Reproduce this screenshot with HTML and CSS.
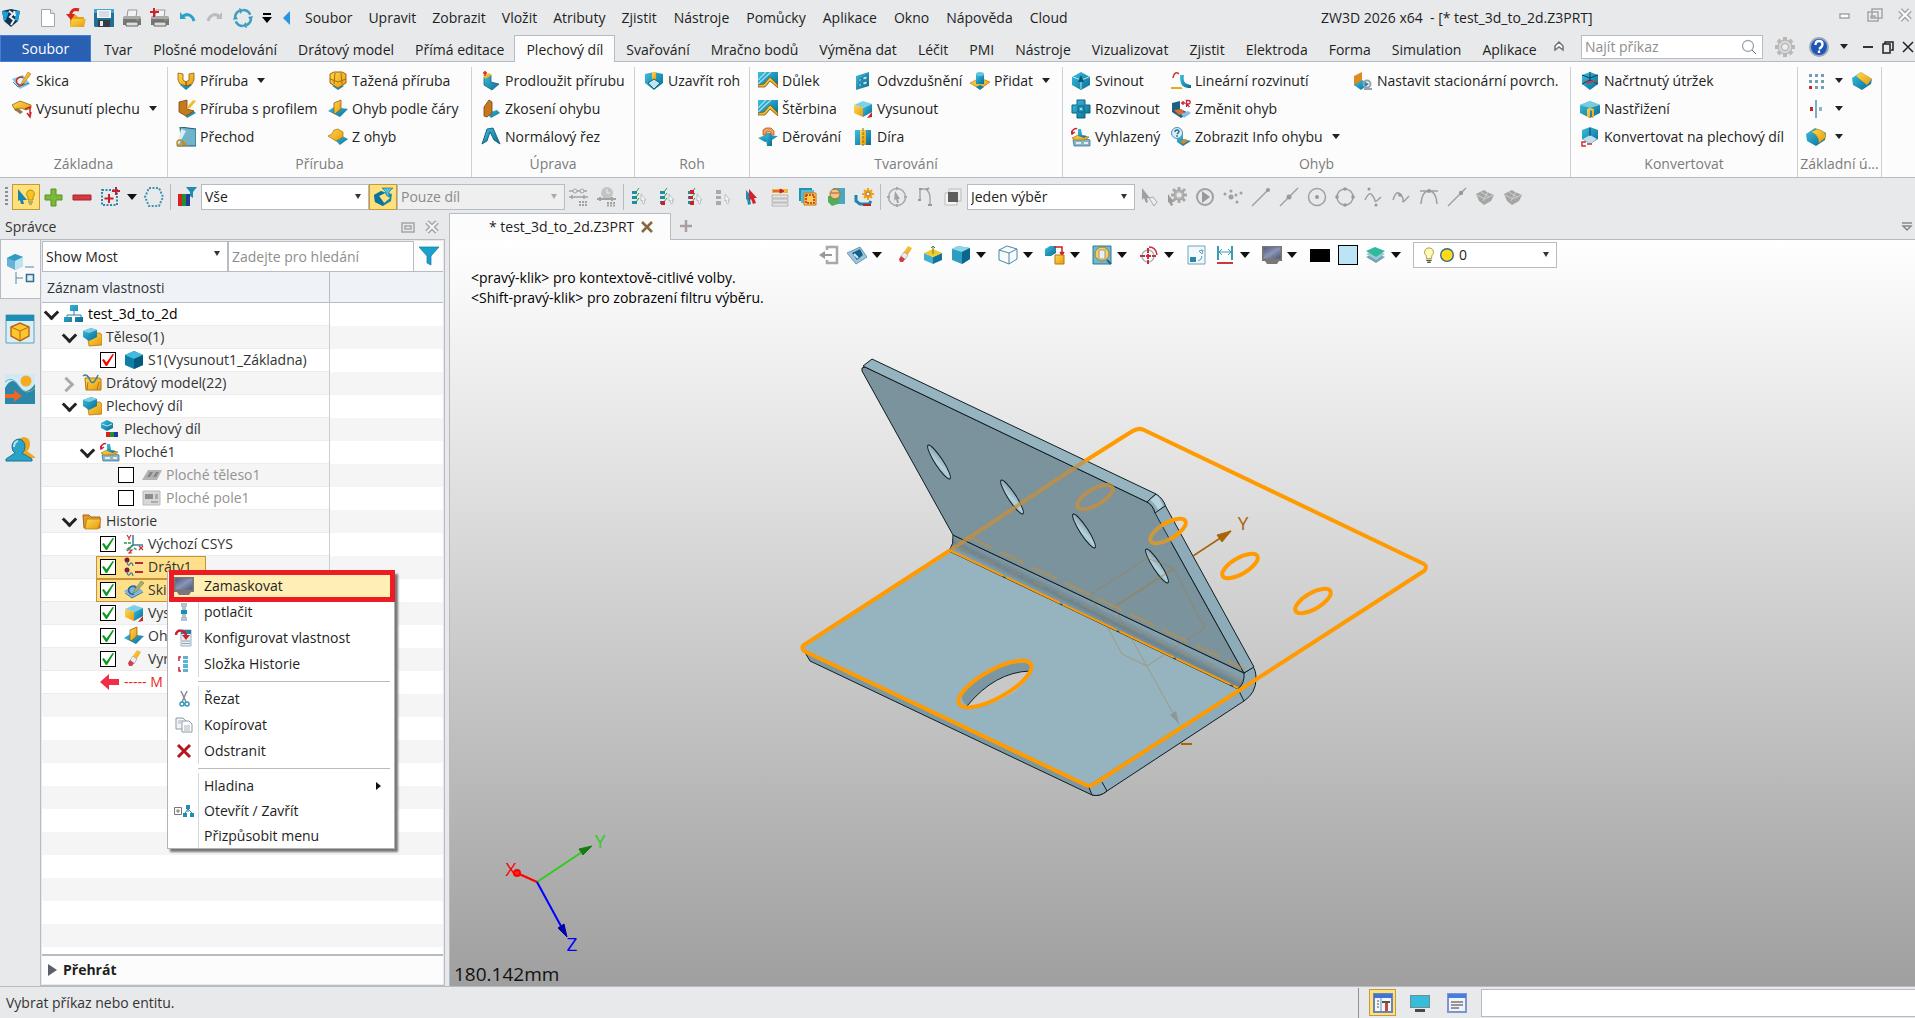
FILE: index.html
```html
<!DOCTYPE html>
<html lang="cs">
<head>
<meta charset="utf-8">
<title>ZW3D 2026 x64 - [* test_3d_to_2d.Z3PRT]</title>
<link rel="stylesheet" href="styles.css">
</head>
<body>
<svg class="sprite" aria-hidden="true">
<defs>
<linearGradient id="t" x1="0" y1="0" x2="1" y2="1"><stop offset="0" stop-color="#3cc0e0"/><stop offset="1" stop-color="#086c94"/></linearGradient>
<linearGradient id="y" x1="0" y1="0" x2="1" y2="1"><stop offset="0" stop-color="#ffd94a"/><stop offset="1" stop-color="#e79a10"/></linearGradient>
<linearGradient id="g" x1="0" y1="0" x2="0" y2="1"><stop offset="0" stop-color="#d4d4d4"/><stop offset="1" stop-color="#8a8a8a"/></linearGradient>
<linearGradient id="scr" x1="0" y1="0" x2="1" y2="1"><stop offset="0" stop-color="#4f5a85"/><stop offset=".5" stop-color="#8b95b5"/><stop offset="1" stop-color="#4c5574"/></linearGradient>
</defs>
<symbol id="logo" viewBox="0 0 20 20"><path d="M1 3l9-2 9 2-2 10-7 6-7-6z" fill="#12314f"/><path d="M1 3l7 1-3 8-2 1zM19 3l-5 0 0 9 3 1z" fill="#1c9fd8"/><path d="M8 3l4 3-3 3 4 3-3 5M13 3l1 5" stroke="#e8f1f6" stroke-width="2" fill="none"/></symbol>
<symbol id="new" viewBox="0 0 20 20"><path d="M3.500 1.500h9l4 4v13h-13z" fill="#fff" stroke="#9aa9ba"/><path d="M12.500 1.500v4h4" fill="#e3e9f0" stroke="#9aa9ba"/></symbol>
<symbol id="open" viewBox="0 0 20 20"><path d="M4 7h6l2 2h6v9H4z" fill="#e8a01c"/><path d="M6 11h14l-2 8H4z" fill="url(#y)"/><path d="M13 2C7 0 4 4 5 8" stroke="#d9261c" stroke-width="3" fill="none"/><path d="M0 6l9 0-4 6z" fill="#d9261c"/></symbol>
<symbol id="save" viewBox="0 0 20 20"><path d="M0 1h20v18H1l-1-1z" fill="#216f94"/><path d="M0 1h20v4H0z" fill="#43a5cd"/><path d="M3 2h14v8H3z" fill="#f4f6f7"/><path d="M5 4h10M5 6h10M5 8h10" stroke="#b9c3ca"/><path d="M4 12h12v7H4z" fill="#343c44"/><path d="M6 13h3v5H6z" fill="#e8ecef"/></symbol>
<symbol id="print" viewBox="0 0 20 20"><path d="M6 2h9l-1 7H5z" fill="#f3f3f3" stroke="#999"/><path d="M2 8h16l1 3v6H1v-6z" fill="#777"/><path d="M2 8h16l1 3H1z" fill="#aaa"/><path d="M4 14h12v4H4z" fill="#dcdcdc" stroke="#666"/><path d="M14 12h3" stroke="#5c5" /></symbol>
<symbol id="printp" viewBox="0 0 20 20"><use href="#print"/><path d="M4 0v9M0 4h9" stroke="#d3202c" stroke-width="2"/></symbol>
<symbol id="undo" viewBox="0 0 20 20"><path d="M5 9c4-4 10-3 12 4" stroke="#27a3cd" stroke-width="3" fill="none"/><path d="M3 4l6 7H3z" fill="#27a3cd"/></symbol>
<symbol id="redo" viewBox="0 0 20 20"><path d="M15 9C11 5 5 6 3 13" stroke="#bcbcbc" stroke-width="3" fill="none"/><path d="M17 4l-6 7h6z" fill="#bcbcbc"/></symbol>
<symbol id="refresh" viewBox="0 0 20 20"><circle cx="10" cy="10" r="8" fill="none" stroke="#3d9fc0" stroke-width="2.500" stroke-dasharray="9 3.500"/><path d="M6 0l5 2-4 4zM20 8l-2 5-3-4zM14 20l-5-2 4-4zM0 12l2-5 3 4z" fill="#3d9fc0"/></symbol>
<symbol id="car" viewBox="0 0 10 10"><path d="M0 2h10L5 8z" fill="#111"/></symbol>
<symbol id="scar" viewBox="0 0 10 10"><path d="M1 2h8L5 7z" fill="#222"/></symbol>
<symbol id="sketch" viewBox="0 0 20 20"><path d="M0 8l11-4 7 9-10 5z" fill="#8fc3e0"/><path d="M1 11l5 5 11-4" fill="none" stroke="#3981a8"/><path d="M11 7a4 4 0 10 1 5" fill="#e6f2fa" stroke="#b3332c" stroke-width="1.500"/><path d="M10 11l6-10 3 2-7 9-3 1z" fill="url(#y)" stroke="#b7781a" stroke-width=".6"/></symbol>
<symbol id="sketchb" viewBox="0 0 20 20"><path d="M0 11l11-6 8 6-11 7z" fill="#7fb5dd"/><path d="M1 13l7 5 11-6" fill="none" stroke="#3b77a8"/><path d="M12 8a4 4 0 10-2 6" fill="none" stroke="#2a5f96" stroke-width="1.500"/><path d="M10 11l7-10 3 2-8 9-3 1z" fill="#a9ae72" stroke="#77793f" stroke-width=".6"/></symbol>
<symbol id="sheet" viewBox="0 0 20 20"><path d="M0 6l8-4 11 4v3l-5 2-5-2-5 3z" fill="url(#y)" stroke="#8a6416" stroke-width=".8"/><path d="M2 10l4-1 5 4-3 2z" fill="#94793d"/><path d="M13 10l5-2v9M15 14l3 4 1-5" stroke="#c9262c" stroke-width="1.500" fill="none"/></symbol>
<symbol id="flange" viewBox="0 0 20 20"><path d="M4 14l6-4 6 4-6 5z" fill="url(#t)"/><path d="M2 2l5 1v6l3 2v4l-6-2-2-4zM18 2l-5 1v6l-3 2v4l6-2 2-4z" fill="url(#y)" stroke="#8a5a12" stroke-width=".8"/></symbol>
<symbol id="flprof" viewBox="0 0 20 20"><path d="M8 15l8-4 4 3-9 5z" fill="url(#t)"/><path d="M3 3l8-2v9l7 2-8 5-7-4z" fill="#c57a1d" stroke="#7c430d" stroke-width=".8"/><path d="M11 8l6-7 3 1-6 7-3 1z" fill="url(#y)"/></symbol>
<symbol id="trans" viewBox="0 0 20 20"><path d="M4 0l16 2v17H1l4-9z" fill="#71b4ca" stroke="#155c78"/><path d="M5 2l5 2L3 17l-2 1z" fill="#d7eef5"/><circle cx="4" cy="16" r="3" fill="none" stroke="#c88b1c" stroke-width="1.500"/><path d="M6 14l5 5" stroke="#c88b1c" stroke-width="2"/></symbol>
<symbol id="swept" viewBox="0 0 20 20"><path d="M4 15l6-3 6 3-6 4z" fill="url(#t)"/><path d="M2 3l4-2h8l4 2v9l-8 5-8-5z" fill="url(#y)" stroke="#9b6710"/><path d="M7 2l-1 11M13 2l1 11M2 8l8 3 8-3" stroke="#a86e12" fill="none"/></symbol>
<symbol id="bendline" viewBox="0 0 20 20"><path d="M0 12l6-4 14 2-8 8z" fill="url(#t)"/><path d="M6 4l7-3v9l-6 5-1-1z" fill="url(#y)" stroke="#a1590e" stroke-width=".8"/></symbol>
<symbol id="zbend" viewBox="0 0 20 20"><path d="M7 13l7-4 6 3-8 6z" fill="url(#t)"/><path d="M0 9l4-2 2-4 4-1 5 3v5l-7 4z" fill="url(#y)" stroke="#ad6f0e" stroke-width=".7"/></symbol>
<symbol id="extend" viewBox="0 0 20 20"><path d="M3 6l7-2v7l8 2-7 6-8-5z" fill="url(#t)" stroke="#0b5675" stroke-width=".7"/><path d="M2 4l6-2 3 2-7 4z" fill="url(#y)"/><path d="M4 5V0M2 2h4" stroke="#d8281f" stroke-width="1.500"/></symbol>
<symbol id="taper" viewBox="0 0 20 20"><path d="M6 14l10-3 3 3-9 5z" fill="url(#t)"/><path d="M3 17V8l5-7 3 2v11l-5 4z" fill="#c57a1d" stroke="#7c430d" stroke-width=".8"/></symbol>
<symbol id="ncut" viewBox="0 0 20 20"><path d="M1 17L6 2l6-1 7 16-6-4-4-8-3 9z" fill="url(#t)" stroke="#0a4c6a" stroke-width=".8"/></symbol>
<symbol id="corner" viewBox="0 0 20 20"><path d="M1 3l9-2 9 2v9l-9 7-9-7z" fill="url(#t)"/><path d="M8 1h4v8H8z" fill="url(#y)"/><path d="M4 12l6-4 6 4-6 6z" fill="#bfe3ef" stroke="#146384"/></symbol>
<symbol id="dimple" viewBox="0 0 20 20"><path d="M0 1h20v15l-8-6-3 4-4 2-5-2z" fill="url(#t)"/><path d="M0 13L13 1M0 9L8 1" stroke="#9cdcea" stroke-width="1.500"/><path d="M0 14l6-1 6-7 8 8v3l-8-7-5 6-7 0z" fill="url(#y)" stroke="#7c5a18" stroke-width=".8"/></symbol>
<symbol id="punch" viewBox="0 0 20 20"><path d="M0 11l7-3 13 1-6 4-7 2z" fill="url(#t)"/><path d="M7 6h7v13H9z" fill="url(#t)"/><path d="M5 8V3l3-2h5l3 3v4h-3V5H8v3z" fill="#f2a35b" stroke="#b5551a" stroke-width=".8"/></symbol>
<symbol id="louver" viewBox="0 0 20 20"><path d="M3 5l13-4v14L3 19z" fill="url(#t)"/><path d="M6 8l2-1v3l-2 1zM10 6l4-1v3l-4 1zM6 13l2-1v3l-2 1zM10 11l4-1v3l-4 1z" fill="#bde6f2" stroke="#0a5d80" stroke-width=".6"/></symbol>
<symbol id="extrude" viewBox="0 0 20 20"><path d="M1 6l9-4 9 3-9 4z" fill="#7fd0e6"/><path d="M1 6l9 3v9l-9-4z" fill="url(#y)"/><path d="M10 9l9-4v8l-9 5z" fill="url(#t)"/><path d="M14 19l5-1 0-5z" fill="#cf2027"/></symbol>
<symbol id="hole" viewBox="0 0 20 20"><path d="M2 3h16v15H2z" fill="url(#t)"/><path d="M7 3h6v15H7z" fill="url(#y)"/><path d="M10 1v18" stroke="#8a6416" stroke-dasharray="3 1"/></symbol>
<symbol id="add" viewBox="0 0 20 20"><path d="M0 12l10-5 10 4-10 7z" fill="url(#y)" stroke="#b27814" stroke-width=".7"/><path d="M6 3h8v10H6z" fill="url(#t)"/><ellipse cx="10" cy="3" rx="4" ry="2" fill="#66c4de"/><path d="M6 16l4-2 4 2-4 3z" fill="#1680a6"/></symbol>
<symbol id="fold" viewBox="0 0 20 20"><path d="M1 6l9-5 9 5v8l-9 5-9-5z" fill="url(#t)"/><path d="M2 6l8 3 8-3M10 9v9" stroke="#bfe6f0" fill="none"/><path d="M7 11l3-7 3 7z" fill="#08587a"/></symbol>
<symbol id="unfold" viewBox="0 0 20 20"><path d="M6 1h8v5h5v8h-5v5H6v-5H1V6h5z" fill="url(#t)" stroke="#0a6185"/><path d="M7 7h6v6H7z" fill="#2d9dbf" stroke="#0a5c80"/><circle cx="10" cy="10" r="1" fill="#cfeef6"/></symbol>
<symbol id="flat" viewBox="0 0 20 20"><path d="M2 13l7-3 10 3v6H3z" fill="#86b6cf" stroke="#2d6785" stroke-width=".7"/><path d="M5 16h5M13 16h4" stroke="#fff" stroke-width="1.500"/><path d="M1 11l6-3 11 2-4 3H4z" fill="url(#y)" stroke="#96640e" stroke-width=".6"/><path d="M7 9V2h3l1 6 5 1-3 2z" fill="url(#t)"/><path d="M1 6c0-4 4-5 5-4M0 4l1 3 3-2" stroke="#c82430" stroke-width="1.500" fill="none"/></symbol>
<symbol id="linear" viewBox="0 0 20 20"><path d="M9 4h4c-1 6 0 9 7 10v3c-8 0-11-2-11-13z" fill="url(#t)"/><path d="M0 16h10l2 2H0z" fill="#e6a91c"/><path d="M2 7C3 1 6 1 8 3" stroke="#d03a34" stroke-width="1.500" fill="none"/></symbol>
<symbol id="chbend" viewBox="0 0 20 20"><path d="M1 4l8-2v8l9 4-8 5-9-6z" fill="#1e5f86"/><path d="M3 11l8-1 2 4-5 2z" fill="#e06b2d"/><path d="M10 15l7-3 3 2-7 5z" fill="#8bbbe0"/><path d="M10 4h4M12 2v4M15.500 8V1.500h2a1.500 1.500 0 010 3.500h-2l3 3" stroke="#c72531" stroke-width="1.300" fill="none"/></symbol>
<symbol id="info" viewBox="0 0 20 20"><path d="M6 8l6-1v5l8 2-8 5-6-4z" fill="url(#t)"/><path d="M9 14l6-2 2 2-5 3z" fill="#d98b1e"/><circle cx="6" cy="6" r="5.500" fill="#d8ecf5" stroke="#4f8fae"/><path d="M4 5q0-2 2-2t2 2l-2 2M6 8v2" stroke="#1e6c90" stroke-width="1.300" fill="none"/></symbol>
<symbol id="station" viewBox="0 0 20 20"><path d="M1 5l8-4v9l-8 5z" fill="#e08a1d"/><path d="M1 14l8-5 7 4-8 6z" fill="url(#t)"/><circle cx="14" cy="13" r="3.500" fill="none" stroke="#98a2aa" stroke-width="2"/><path d="M11 18h8" stroke="#98a2aa" stroke-width="2"/></symbol>
<symbol id="rip" viewBox="0 0 20 20"><path d="M2 4l8-3 8 3v9l-8 6-8-6z" fill="url(#t)"/><path d="M2 4l8 3 8-3M10 1v9M2 13l8-4 8 4" stroke="#08405f" fill="none"/><path d="M5 10l3 2 4-2 4 1" stroke="#d6323a" stroke-width="1.500" fill="none"/></symbol>
<symbol id="shear" viewBox="0 0 20 20"><path d="M0 6l10-4 10 4v8l-10 5L0 14z" fill="url(#t)"/><path d="M0 6l10 3 10-3-10-4z" fill="#79cbe0"/><path d="M7 18v-8l3-1 4 1v8l-2 1v-7l-2-1v8z" fill="url(#y)"/></symbol>
<symbol id="conv" viewBox="0 0 20 20"><path d="M2 3l8-3 8 3v9l-8 5-8-5z" fill="url(#t)"/><path d="M3 12l7-4 7 4-7 5z" fill="#bfe0ec"/><path d="M10 1v8" stroke="#073c58"/><path d="M6 15H2v4h4M7 17h5" stroke="#d22c35" stroke-width="1.500" fill="none"/></symbol>
<symbol id="pattern" viewBox="0 0 20 20"><path d="M3 3h3v3H3zM9 3h3v3H9zM15 3h3v3h-3zM3 9h3v3H3zM9 9h3v3H9zM15 9h3v3h-3zM9 15h3v3H9zM15 15h3v3h-3z" fill="#6f9fb5"/><path d="M3 15h3v3H3z" fill="#d0222c"/></symbol>
<symbol id="mirror" viewBox="0 0 20 20"><path d="M10 1v18" stroke="#4799b8" stroke-width="1.500"/><path d="M4 8h3v4H4z" fill="#d0222c"/><path d="M13 8h3v4h-3z" fill="#8fb3c3"/></symbol>
<symbol id="chamf" viewBox="0 0 20 20"><path d="M0 7l9-6 11 7-1 5-9 6-9-5z" fill="url(#t)"/><path d="M4 5l5-4 11 7-5 6z" fill="url(#y)"/></symbol>
<symbol id="fillet" viewBox="0 0 20 20"><path d="M0 7l9-6 11 5-1 7-9 6-9-5z" fill="url(#t)"/><path d="M5 5l6-3q9 2 9 8l-7 6q0-8-8-11z" fill="url(#y)" stroke="#a87712" stroke-width=".5"/></symbol>
<symbol id="pick" viewBox="0 0 20 20"><path d="M2 2l9 11H7l1 4-3 0-1-4-2 1z" fill="#1a86b0"/><path d="M14 3a4 4 0 013 7v3h-5v-3a4 4 0 012-7z" fill="#f8c51e" stroke="#b98a10"/><path d="M12 15h5M13 17h3" stroke="#7c7250"/></symbol>
<symbol id="plus" viewBox="0 0 20 20"><path d="M7 2h5v6h6v5h-6v6H7v-6H1V8h6z" fill="#7db83a" stroke="#5b9324"/></symbol>
<symbol id="minus" viewBox="0 0 20 20"><path d="M1 8h18v5H1z" fill="#d23a41" stroke="#a9222a"/></symbol>
<symbol id="marq" viewBox="0 0 20 20"><path d="M2 3h15v15H2z" fill="none" stroke="#2f89a9" stroke-width="2" stroke-dasharray="2 1.500"/><path d="M9 7v9M4.500 11.500h9M16 0v8M12 4h8" stroke="#c3202c" stroke-width="2"/></symbol>
<symbol id="hex" viewBox="0 0 20 20"><path d="M5 1h10l4 9-4 9H5l-4-9z" fill="none" stroke="#3f93b1" stroke-width="2" stroke-dasharray="2 1.500"/></symbol>
<symbol id="rgb" viewBox="0 0 20 20"><path d="M1 7h4v12H1z" fill="#d91e24"/><path d="M5 7h4v12H5z" fill="#21902f"/><path d="M9 7h4v12H9z" fill="#273a9b"/><path d="M9 0h11l-4 5v6l-3-2V5z" fill="#1f8db3"/></symbol>
<symbol id="cubef" viewBox="0 0 20 20"><path d="M1 8l7-4 11 3-1 7-8 5-8-4z" fill="url(#t)"/><path d="M6 9l6-3 5 5-6 5z" fill="#ffe07a"/><path d="M1 8l7-4 4 2-6 3 5 7-1 3-8-4z" fill="#0c749c"/><path d="M9 1h11l-4 4v5l-3-2V5z" fill="#4cc3df" stroke="#0e6d8e" stroke-width=".6"/></symbol>
<symbol id="ref1" viewBox="0 0 20 20"><circle cx="6" cy="4" r="2" fill="none" stroke="#a2a2a2"/><circle cx="13" cy="4" r="2" fill="none" stroke="#a2a2a2"/><path d="M0 4h4M8 4h3M15 4h3M0 10h19M3 8v4M15 8v4" stroke="#a2a2a2" stroke-width="1.500"/><path d="M10 15h9M10 18h9" stroke="#a2a2a2" stroke-width="2" stroke-dasharray="2 1"/></symbol>
<symbol id="ref2" viewBox="0 0 20 20"><circle cx="10" cy="6" r="6" fill="#c4c4c4"/><path d="M10 2v4h3" stroke="#eee" fill="none"/><path d="M0 12h19M3 10v4M15 10v4" stroke="#a2a2a2" stroke-width="2"/><path d="M10 16h9M10 18.500h9" stroke="#a2a2a2" stroke-width="2" stroke-dasharray="2 1"/></symbol>
<symbol id="l1" viewBox="0 0 20 20"><path d="M2 4h5v3H2zM2 9h5v3H2zM2 14h5v3H2z" fill="#198eac"/><path d="M5 4l1 1 3-4M5 9l1 1 3-4M5 14l1 1 3-4" stroke="#2e9a38" fill="none"/><path d="M11 7l5 6h-2l1 3-2 1-1-4-1 1z" fill="#f5f5f5" stroke="#aab8c2" stroke-width=".8"/></symbol>
<symbol id="l2" viewBox="0 0 20 20"><use href="#l1"/><path d="M3 14h4v4H3z" fill="#cf2029"/></symbol>
<symbol id="l3" viewBox="0 0 20 20"><use href="#l1"/><path d="M4 3h4v4H4zM3 9h4v3H3zM4 14h4v4H4z" fill="#cf2029"/></symbol>
<symbol id="l4" viewBox="0 0 20 20"><path d="M2 3h5v4H2zM2 9h5v3H2zM2 14h5v4H2z" fill="#aaa"/><path d="M11 7l5 6h-2l1 3-2 1-1-4-1 1z" fill="#f5f5f5" stroke="#b8b8b8" stroke-width=".8"/></symbol>
<symbol id="arr2" viewBox="0 0 20 20"><path d="M4 3l8 9H8l1 5-3 1-1-6-1 1z" fill="#1c8fb5"/><path d="M7 2l8 9h-3l2 5-3 1-2-5-2 2z" fill="#d4222b"/></symbol>
<symbol id="rows" viewBox="0 0 20 20"><path d="M2 2h16v4H2z" fill="#f4b43a"/><path d="M3 4h9M10 2l4 2-4 2z" stroke="#c92020" fill="#c92020"/><path d="M2 8h16v3H2zM2 12h16v3H2zM2 16h16v3H2z" fill="#e5e5e5" stroke="#a3a3a3" stroke-width=".7"/></symbol>
<symbol id="boxsel" viewBox="0 0 20 20"><path d="M1 1h13v13H1z" fill="#1e93b4"/><path d="M3 3h13v13H3z" fill="#5cb9d0"/><path d="M6 6h12v12H6z" fill="#ffcf4c" stroke="#c4790f"/><path d="M8 8h8v8H8z" fill="none" stroke="#c3202c" stroke-width="1.500" stroke-dasharray="2 1"/></symbol>
<symbol id="ballsel" viewBox="0 0 20 20"><path d="M7 1h12v16H7z" fill="#4ba7c0"/><path d="M2 9h12l-2 8-6 2-4-4z" fill="#4fae5b"/><circle cx="9" cy="7" r="5" fill="#f0c58c" stroke="#a66a2c"/><path d="M5 6h8" stroke="#b35828"/></symbol>
<symbol id="gearsel" viewBox="0 0 20 20"><path d="M2 8v6l4 3h9l2-3" stroke="#1b87ad" stroke-width="3" fill="none"/><path d="M9 18h8" stroke="#c3202c" stroke-width="2"/><path d="M14 1v12M8 7h12M10 3l8 8M18 3l-8 8" stroke="#eda41c" stroke-width="2"/><circle cx="14" cy="7" r="4" fill="#eda41c"/><circle cx="14" cy="7" r="2" fill="#fff" stroke="#b86a10"/></symbol>
<symbol id="g1" viewBox="0 0 20 20"><circle cx="10" cy="10" r="8.500" fill="none" stroke="#a7a7a7" stroke-width="1.500"/><path d="M8 4l5 8h-2l1 4h-2l-1-4-2 2z" fill="#a2a2a2"/><path d="M0 10h3M17 10h3M10 0v3M10 17v3" stroke="#a7a7a7" stroke-width="2"/></symbol>
<symbol id="g2" viewBox="0 0 20 20"><path d="M5 14V2h6q5 3 4 15" fill="none" stroke="#a7a7a7" stroke-width="1.500"/><path d="M3 13h3M13 18h4M4 2h3M11 3l3-2" stroke="#999" stroke-width="2"/></symbol>
<symbol id="g3" viewBox="0 0 20 20"><path d="M6 2h12v12H6z" fill="#ededed" stroke="#bbb"/><path d="M2 6h12v12H2z" fill="#f4f4f4" stroke="#bbb"/><path d="M5 5h10v10H5z" fill="#5d5d5d"/></symbol>
<symbol id="g4" viewBox="0 0 20 20"><path d="M3 1l8 10H8l1 4-2 1-2-5-2 2z" fill="#a0a0a0"/><path d="M10 11l4-1 4 5-3 4z" fill="#eee" stroke="#aaa"/></symbol>
<symbol id="g5" viewBox="0 0 20 20"><path d="M12 0v16M4 8h16M6 2l12 12M18 2L6 14" stroke="#aaa" stroke-width="3"/><circle cx="12" cy="8" r="5" fill="#b5b5b5" stroke="#a3a3a3"/><circle cx="12" cy="8" r="2.500" fill="#e7e8ea"/><path d="M1 7l6 8H5l1 3-2 1-2-4-1 1z" fill="#9a9a9a"/></symbol>
<symbol id="g6" viewBox="0 0 20 20"><circle cx="10" cy="10" r="8" fill="none" stroke="#a0a0a0" stroke-width="2"/><path d="M7 4l8 6-8 6z" fill="#999"/></symbol>
<symbol id="g7" viewBox="0 0 20 20"><g fill="#a0a0a0"><circle cx="2" cy="7" r="1.500"/><circle cx="8" cy="4" r="1.500"/><circle cx="8" cy="10" r="2.500"/><circle cx="13" cy="8" r="1.500"/><circle cx="18" cy="6" r="1.500"/><circle cx="14" cy="15" r="1.500"/></g></symbol>
<symbol id="g8" viewBox="0 0 20 20"><path d="M1 19L17 3" stroke="#a0a0a0" stroke-width="1.500"/><circle cx="17" cy="3" r="2" fill="#999"/></symbol>
<symbol id="g9" viewBox="0 0 20 20"><path d="M1 19L19 1" stroke="#a0a0a0" stroke-width="1.500"/><circle cx="10" cy="10" r="2.500" fill="#999"/></symbol>
<symbol id="g10" viewBox="0 0 20 20"><circle cx="10" cy="10" r="8.500" fill="none" stroke="#a0a0a0" stroke-width="1.500"/><circle cx="10" cy="10" r="2" fill="#999"/></symbol>
<symbol id="g11" viewBox="0 0 20 20"><circle cx="10" cy="10" r="8" fill="none" stroke="#a0a0a0" stroke-width="1.500"/><g fill="#999"><circle cx="10" cy="2" r="1.800"/><circle cx="10" cy="18" r="1.800"/><circle cx="2" cy="10" r="1.800"/><circle cx="18" cy="10" r="1.800"/></g></symbol>
<symbol id="g12" viewBox="0 0 20 20"><path d="M2 13q4-9 7-5t3 6 6-4" fill="none" stroke="#a0a0a0" stroke-width="1.500"/><circle cx="6" cy="2" r="1.500" fill="#999"/><circle cx="13" cy="18" r="1.500" fill="#999"/></symbol>
<symbol id="g13" viewBox="0 0 20 20"><path d="M2 13q3-10 7-6t3 7 6-5" fill="none" stroke="#a0a0a0" stroke-width="1.500"/><circle cx="9" cy="8" r="1.800" fill="#999"/></symbol>
<symbol id="g14" viewBox="0 0 20 20"><path d="M1 4h18M2 17q1-13 8-13t8 13" fill="none" stroke="#a0a0a0" stroke-width="1.500"/><circle cx="10" cy="4" r="2" fill="#999"/></symbol>
<symbol id="g15" viewBox="0 0 20 20"><path d="M1 19L19 1" stroke="#a0a0a0" stroke-width="1.500"/><circle cx="14" cy="6" r="2.200" fill="#999"/></symbol>
<symbol id="g16" viewBox="0 0 20 20"><path d="M1 7l8-4 3 2 7 3-3 6-7 4-5-4z" fill="#a5a5a5"/><path d="M2 8l8 4 8-4M6 5l8 5M8 14l5-9" stroke="#cfcfcf" fill="none"/></symbol>
<symbol id="tree" viewBox="0 0 20 20"><path d="M10 6v5M3 14v-3h14v3" stroke="#3c7f9d" fill="none"/><path d="M6 1h8v6H6zM0 13h8v5H0zM11 13h8v5h-8z" fill="url(#t)"/></symbol>
<symbol id="folder" viewBox="0 0 20 20"><path d="M1 4h6l2 2h9v11H2z" fill="#e29a25" stroke="#a8641a"/><path d="M5 8h14l-3 10H3z" fill="url(#y)" stroke="#b87617" stroke-width=".7"/></symbol>
<symbol id="fcube" viewBox="0 0 20 20"><path d="M5 6h13l2 2v10l-13 1z" fill="url(#y)" stroke="#b87617" stroke-width=".8"/><path d="M1 4l8-3 6 2v7l-8 4-6-4z" fill="url(#t)"/><path d="M1 4l8-3 6 2-8 3z" fill="#7dd0e4"/></symbol>
<symbol id="fwire" viewBox="0 0 20 20"><path d="M3 5h14l2 1v11H4z" fill="url(#y)" stroke="#b87617"/><path d="M6 9l-1 8M17 9l-2 8" stroke="#b87617"/><path d="M1 3q4-3 7 4t8-5" fill="none" stroke="#3b7f97" stroke-width="1.500"/></symbol>
<symbol id="cube" viewBox="0 0 20 20"><path d="M1 5l9-4 9 4v10l-9 4-9-4z" fill="#0f7fa6"/><path d="M1 5l9-4 9 4-9 4z" fill="#42bcdc"/><path d="M10 9l9-4v10l-9 4z" fill="#075a7e"/></symbol>
<symbol id="smc" viewBox="0 0 20 20"><path d="M1 4l6-3 6 3v5l-6 3-6-3z" fill="url(#t)"/><path d="M2 5l5 2 5-2" stroke="#bfe6f0" fill="none"/><path d="M6 13h4v5H6z" fill="#d91e24"/><path d="M10 13h4v5h-4z" fill="#21902f"/><path d="M14 13h4v5h-4z" fill="#273a9b"/></symbol>
<symbol id="gsheet" viewBox="0 0 20 20"><path d="M0 15l6-10h14l-5 10z" fill="#b3b3b3"/><path d="M5 12l3-5h3l-3 5zM11 12l3-5h3l-3 5z" fill="#858585"/></symbol>
<symbol id="gbox" viewBox="0 0 20 20"><path d="M1 3h17v14H1z" fill="#d7d7d7" stroke="#bbb"/><path d="M3 6h8v5H3z" fill="#8c8c8c"/><path d="M13 6h3v5h-3zM9 13h7v2H9z" fill="#aaa"/></symbol>
<symbol id="csys" viewBox="0 0 20 20"><path d="M9 11V1M9 11h10M9 11l-6 6" stroke="#3c7f9d" stroke-width="1.500"/><path d="M9 11l-7 5M0 9h7M10 14l3 2" stroke="#2a9a3a" stroke-width="1.500" stroke-dasharray="3 1"/><path d="M3 1l2 3 2-3M5 4v2M15 12l4 4M19 12l-4 4M5 16h3l-3 3h3" stroke="#d02a33" stroke-width="1.200" fill="none"/></symbol>
<symbol id="wires" viewBox="0 0 20 20"><circle cx="3" cy="3" r="2.500" fill="#851d3a"/><circle cx="3" cy="13" r="2.500" fill="#851d3a"/><path d="M3 5q1 5 3 2t3 2M3 15q1 5 3 2t3 2" stroke="#39809d" fill="none" stroke-width="1.300"/><path d="M11 6h8M11 15h8" stroke="#b0293e" stroke-width="2"/></symbol>
<symbol id="eraser" viewBox="0 0 20 20"><path d="M8 8l5-7 4 2-5 8z" fill="url(#y)"/><path d="M6 11l3-4 4 3-3 5z" fill="#ececec" stroke="#999" stroke-width=".6"/><path d="M4 14l2-3 4 3-2 3-3 0z" fill="#cf3f4a"/></symbol>
<symbol id="stop" viewBox="0 0 20 20"><path d="M0 10l9-8v5h10v6H9v5z" fill="#ef2f46"/></symbol>
<symbol id="mon" viewBox="0 0 20 20"><path d="M0 1h20v15H0z" fill="#777" /><path d="M1.500 2.500h17v11h-17z" fill="url(#scr)"/><path d="M3 16h14l-2 3H5z" fill="#777"/></symbol>
<symbol id="supp" viewBox="0 0 20 20"><path d="M7 1h6v4H7zM7 15h6v4H7zM8 5h4v3H8zM8 12h4v3H8z" fill="#b3c3cc"/><path d="M7 8h6v4H7z" fill="#1690bb"/></symbol>
<symbol id="conf" viewBox="0 0 20 20"><path d="M7 2h10v16H7z" fill="#e6edf2" stroke="#9fb1bd"/><path d="M7 2h10v4H7z" fill="#2e7e9e"/><path d="M8 13h8M8 15.500h8" stroke="#92a8b5"/><path d="M2 7C2 1 11 1 12 8" stroke="#cc2230" stroke-width="2.500" fill="none"/><path d="M8 7h8l-4 5z" fill="#cc2230"/></symbol>
<symbol id="hfold" viewBox="0 0 20 20"><path d="M9 2h5v3H9zM9 6h5v3H9zM9 10h5v4H9zM9 15h5v3H9z" fill="#5eb3d3"/><path d="M7 3H5v4M5 13v4h2" stroke="#c92030" stroke-width="1.500" fill="none"/></symbol>
<symbol id="cut" viewBox="0 0 20 20"><path d="M7 2l5 11M13 2L8 13" stroke="#7b8d98" stroke-width="1.500"/><circle cx="8" cy="15" r="2" fill="none" stroke="#3497bb" stroke-width="1.500"/><circle cx="13" cy="15" r="2" fill="none" stroke="#3497bb" stroke-width="1.500"/></symbol>
<symbol id="copy" viewBox="0 0 20 20"><path d="M2 3h7l3 3v8H2z" fill="#f4f5f6" stroke="#8d9aa3"/><path d="M8 6h7l3 3v8H8z" fill="#fff" stroke="#8d9aa3"/><path d="M4 6h4M4 8h3M10 11h6M10 13h6M10 15h6" stroke="#a8b4bc"/></symbol>
<symbol id="del" viewBox="0 0 20 20"><path d="M4 4l12 12M16 4L4 16" stroke="#b3181f" stroke-width="3"/></symbol>
<symbol id="expand" viewBox="0 0 20 20"><path d="M.5 6.500h7v7h-7zM2 10h4M4 8v4" fill="#fff" stroke="#777"/><path d="M14 8v3M11 12l3-4 4 4" stroke="#3c7f9d" fill="none"/><path d="M12 4h4v4h-4zM9 12h4v4H9zM16 12h4v4h-4z" fill="#1c8fb5"/></symbol>
<symbol id="exit" viewBox="0 0 20 20"><path d="M8 5V2h10v16H8v-3" fill="none" stroke="#a8a8a8" stroke-width="2.500"/><path d="M0 10l6-4v3h7v2H6v3z" fill="#999"/></symbol>
<symbol id="film" viewBox="0 0 20 20"><path d="M0 8l13-6 7 10-11 7z" fill="#9cc6dd" stroke="#5588a5" stroke-width=".8"/><path d="M5 8l8-4 3 6-6 5z" fill="#17608b"/><path d="M7 9l4 4" stroke="#d7eaf4" stroke-width="2"/></symbol>
<symbol id="face" viewBox="0 0 20 20"><path d="M1 8l9 4v7l-9-4z" fill="#42b1cf"/><path d="M10 12l9-4v7l-9 4z" fill="#11759b"/><path d="M1 8l9-4 9 4-9 4z" fill="#f4c929"/><path d="M10 9V1M8 3l2-2 2 2" stroke="#4f8b2f" fill="none"/></symbol>
<symbol id="scube" viewBox="0 0 20 20"><path d="M1 4l6-3 12 2v11l-8 5-10-4z" fill="#2d9ec2"/><path d="M1 4l6-3 12 2-8 4z" fill="#8cd6e8"/><path d="M11 7l8-4v11l-8 5z" fill="#0a668c"/></symbol>
<symbol id="wcube" viewBox="0 0 20 20"><path d="M1 5l8-4 10 3v10l-8 5-10-4zM1 5l10 3 8-4M11 8v11" fill="#f7fbfd" stroke="#4a88a5"/></symbol>
<symbol id="disp" viewBox="0 0 20 20"><path d="M0 4l5-3h6v7l-5 3H0z" fill="url(#t)"/><path d="M9 2h8v7M15 7l2 3 2-3" stroke="#c81e2a" fill="none" stroke-width="1.500"/><path d="M10 10h9v9h-9z" fill="url(#y)" stroke="#b87617"/></symbol>
<symbol id="zoomi" viewBox="0 0 20 20"><path d="M1 1h18v18H1z" fill="#6fb8d0" stroke="#2b7a97"/><circle cx="10" cy="9" r="7" fill="#f5d25e" stroke="#a5822a"/><path d="M7 5h6v9H7z" fill="#e9eff2" stroke="#999"/><path d="M15 15l4 4" stroke="#27637c" stroke-width="2"/></symbol>
<symbol id="target" viewBox="0 0 20 20"><circle cx="9" cy="11" r="6" fill="none" stroke="#9fb9c6" stroke-width="1.500"/><path d="M9 3v16M1 11h16" stroke="#cf2b35" stroke-width="2" stroke-dasharray="5 1"/><path d="M10 2q7 0 8 8" fill="none" stroke="#cf2b35" stroke-width="1.500"/></symbol>
<symbol id="win" viewBox="0 0 20 20"><path d="M1 1h17v18H1z" fill="#f2f8fb" stroke="#69a6bd"/><path d="M3 12h6v5H3z" fill="#2d86a6"/><path d="M12 6l4-1-1 4zM11 16q4-1 4-5" fill="none" stroke="#5d9fb9"/></symbol>
<symbol id="dim" viewBox="0 0 20 20"><path d="M3 1v14M17 1v14" stroke="#3e99b7" stroke-width="2"/><path d="M4 7h12M7 4L4 7l3 3M13 4l3 3-3 3" stroke="#3e99b7" fill="none"/><path d="M2 18h16" stroke="#c93a40" stroke-width="2"/></symbol>
<symbol id="layers" viewBox="0 0 20 20"><path d="M0 12l9-4 10 4-9 6z" fill="#74a3b5"/><path d="M0 9l9-4 10 4-9 6z" fill="#9fc8d5"/><path d="M0 6l9-4 10 4-9 6z" fill="#31b99c"/></symbol>
<symbol id="bulb" viewBox="0 0 20 20"><path d="M10 2a5 5 0 013 9v3H7v-3a5 5 0 013-9z" fill="#fff9b8" stroke="#a69a3a"/><path d="M7 16h6M8 18h4" stroke="#555" stroke-width="1.500"/></symbol>
<symbol id="disc" viewBox="0 0 20 20"><circle cx="10" cy="10" r="7" fill="#ffd91a" stroke="#2e6a80" stroke-width="1.500"/></symbol>
<symbol id="funnel" viewBox="0 0 20 20"><path d="M0 1h20l-8 9v9l-4-2v-7z" fill="#1aa0cc" stroke="#0f7ba2" stroke-width=".7"/></symbol>
<symbol id="gear" viewBox="0 0 20 20"><path d="M10 0v20M0 10h20M3 3l14 14M17 3L3 17" stroke="#b9b9b9" stroke-width="4"/><circle cx="10" cy="10" r="7" fill="#d6d6d6" stroke="#b0b0b0"/><circle cx="10" cy="10" r="3.500" fill="#eee" stroke="#aaa"/></symbol>
<symbol id="help" viewBox="0 0 20 20"><circle cx="10" cy="10" r="9" fill="#1f55b5" stroke="#9aa7ba" stroke-width="2"/><path d="M6.500 8q0-4 3.500-4t3.500 3-3.500 5M10 13.500v2.500" stroke="#fff" stroke-width="2.300" fill="none"/></symbol>
<symbol id="s1" viewBox="0 0 30 30"><path d="M1 4l8-4 8 3v9l-8 4-8-4z" fill="#67b3d6"/><path d="M1 4l8-4 8 3-8 4z" fill="#2f9cc6"/><path d="M9 7l8-4v9l-8 4z" fill="#bfe2f1"/><path d="M19 13h9M10 18v12M10 24h7" stroke="#54889f" fill="none"/><path d="M20.500 20.500h7v7h-7z" fill="#e4eef3" stroke="#2f6f8c" stroke-width="1.500"/></symbol>
<symbol id="s2" viewBox="0 0 30 30"><path d="M1 1h28v28H1z" fill="#d8eff7" stroke="#5fa0b8"/><path d="M1 1h28v6H1z" fill="#1e8fb4"/><path d="M6 13l9-4 9 4v9l-9 5-9-5z" fill="#fbc62f" stroke="#c0670f" stroke-width="1.500"/><path d="M6 13l9 4 9-4M15 17v9" stroke="#c0670f" fill="none"/></symbol>
<symbol id="s3" viewBox="0 0 30 30"><path d="M0 0h30v30H0z" fill="#cfeaf4"/><path d="M0 14q7-13 14-2t16-2v20H0z" fill="#2a87a8"/><path d="M0 8q7-7 14 4t16 2" fill="none" stroke="#7ba9bb"/><circle cx="21" cy="7" r="5.500" fill="#f8a91c"/><path d="M0 20h9v-4l8 6-8 6v-4H0z" fill="#ef6427"/></symbol>
<symbol id="s4" viewBox="0 0 30 30"><path d="M18 3q7 0 7 7 0 5-3 7l8 6v1H14V5z" fill="#f3a41f"/><path d="M14 5q6 1 6 8 0 4-3 6l10 6v2H1v-2l9-6q-3-2-3-6 0-7 7-8z" fill="#2aa3c6" stroke="#15759a"/><path d="M13 7q-4 1-4 6" stroke="#b5e4f1" stroke-width="2" fill="none"/></symbol>
<symbol id="b1" viewBox="0 0 20 20"><path d="M1 1h18v18H1z" fill="#f4f6fa" stroke="#6c85b8" stroke-width="2"/><path d="M1 1h18v4H1z" fill="#3d74d6"/><path d="M4 8h2M4 11h2M4 14h2" stroke="#555"/><path d="M8 5v14" stroke="#6c85b8"/><path d="M9 8h8v2H9z" fill="#555"/><path d="M12 10h3v8h-3z" fill="#c9483b"/></symbol>
<symbol id="b2" viewBox="0 0 20 20"><path d="M0 2h20v13H0z" fill="#79898e"/><path d="M1 3h18v11H1z" fill="#35bedb"/><path d="M5 16h10v3H5z" fill="#4a4a4a"/></symbol>
<symbol id="b3" viewBox="0 0 20 20"><path d="M1 1h18v18H1z" fill="#f0f3fa" stroke="#7d96cd" stroke-width="2"/><path d="M1 1h18v4H1z" fill="#4a7ddb"/><path d="M4 9h12M4 12h12M4 15h8" stroke="#777" stroke-width="1.300"/></symbol>
</svg>

<header class="title-bar">
  <div class="quick">
    <svg class="i logo"><use href="#logo"/></svg>
    <button aria-label="Nový"><svg class="i"><use href="#new"/></svg></button>
    <button aria-label="Otevřít"><svg class="i"><use href="#open"/></svg></button>
    <button aria-label="Uložit"><svg class="i"><use href="#save"/></svg></button>
    <button aria-label="Tisk"><svg class="i"><use href="#print"/></svg></button>
    <button aria-label="Rychlý tisk"><svg class="i"><use href="#printp"/></svg></button>
    <button aria-label="Zpět"><svg class="i"><use href="#undo"/></svg></button>
    <button aria-label="Znovu"><svg class="i"><use href="#redo"/></svg></button>
    <button aria-label="Obnovit"><svg class="i"><use href="#refresh"/></svg></button>
    <button class="narrow" aria-label="Přizpůsobit"><svg class="a" viewBox="0 0 10 10"><path d="M1 0h8v2H1zM0 4h10L5 10z"/></svg></button>
    <button class="narrow" aria-label="Sbalit"><svg class="tri" viewBox="0 0 10 20"><path d="M8 3v14L1 10z" fill="#2497e0"/></svg></button>
  </div>
  <nav class="menu">
    <a href="#">Soubor</a><a href="#">Upravit</a><a href="#">Zobrazit</a><a href="#">Vložit</a><a href="#">Atributy</a><a href="#">Zjistit</a><a href="#">Nástroje</a><a href="#">Pomůcky</a><a href="#">Aplikace</a><a href="#">Okno</a><a href="#">Nápověda</a><a href="#">Cloud</a>
  </nav>
  <div class="app-title">ZW3D 2026 x64&nbsp; - [* test_3d_to_2d.Z3PRT]</div>
  <div class="win-ctl">
    <button aria-label="Minimalizovat"><svg viewBox="0 0 16 16"><path d="M3 7h9v4H3z" fill="#fff" stroke="#a3a6a9" stroke-width="1.500"/></svg></button>
    <button aria-label="Obnovit okno"><svg viewBox="0 0 16 16"><path d="M5 2h10v9H5zM1 5h10v9H1zM4 9h4v2H4z" fill="#eee" stroke="#a3a6a9" stroke-width="1.500"/></svg></button>
    <button aria-label="Zavřít"><svg viewBox="0 0 16 16"><path d="M3 3l10 10M13 3L3 13" stroke="#a3a6a9" stroke-width="5"/><path d="M3 3l10 10M13 3L3 13" stroke="#fff" stroke-width="2"/></svg></button>
  </div>
</header>

<div class="tab-bar">
  <nav class="tabs">
    <a class="file" href="#">Soubor</a><a href="#">Tvar</a><a href="#">Plošné modelování</a><a href="#">Drátový model</a><a href="#">Přímá editace</a><a class="on" href="#">Plechový díl</a><a href="#">Svařování</a><a href="#">Mračno bodů</a><a href="#">Výměna dat</a><a href="#">Léčit</a><a href="#">PMI</a><a href="#">Nástroje</a><a href="#">Vizualizovat</a><a href="#">Zjistit</a><a href="#">Elektroda</a><a href="#">Forma</a><a href="#">Simulation</a><a href="#">Aplikace</a>
  </nav>
  <div class="tab-tools">
    <button aria-label="Sbalit pás"><svg class="col" viewBox="0 0 12 12"><path d="M2 5l4-4 4 4v4L6 6 2 9z" fill="#fff" stroke="#70767c" stroke-width="1.500"/></svg></button>
    <div class="find"><input type="text" placeholder="Najít příkaz" aria-label="Najít příkaz"><svg viewBox="0 0 16 16"><circle cx="7" cy="7" r="5.500" fill="none" stroke="#a0a6ab" stroke-width="1.300"/><path d="M11 11l4 4" stroke="#46a" /></svg></div>
    <button class="gearb" aria-label="Nastavení"><svg class="i"><use href="#gear"/></svg></button>
    <button aria-label="Nápověda"><svg class="i"><use href="#help"/></svg></button>
    <button class="hc" aria-label="Další nápověda"><svg class="a"><use href="#scar"/></svg></button>
    <button aria-label="Minimalizovat dokument"><svg class="m" viewBox="0 0 14 14"><path d="M2 7h10" stroke="#333" stroke-width="2"/></svg></button>
    <button aria-label="Obnovit dokument"><svg class="m" viewBox="0 0 14 14"><path d="M4 4V2h8v8h-2M2 4h7v9H2z" fill="none" stroke="#222" stroke-width="1.500"/></svg></button>
    <button aria-label="Zavřít dokument"><svg class="m" viewBox="0 0 14 14"><path d="M2 2l10 10M12 2L2 12" stroke="#222" stroke-width="1.500"/></svg></button>
  </div>
</div>

<section class="ribbon" aria-label="Plechový díl">
  <div class="grp g1"><div class="cols">
    <div><button><svg class="i"><use href="#sketch"/></svg>Skica</button><button><svg class="i"><use href="#sheet"/></svg>Vysunutí plechu<svg class="a"><use href="#scar"/></svg></button></div>
  </div><h2>Základna</h2></div>
  <div class="grp g2"><div class="cols">
    <div><button><svg class="i"><use href="#flange"/></svg>Příruba<svg class="a"><use href="#scar"/></svg></button><button><svg class="i"><use href="#flprof"/></svg>Příruba s profilem</button><button><svg class="i"><use href="#trans"/></svg>Přechod</button></div>
    <div><button><svg class="i"><use href="#swept"/></svg>Tažená příruba</button><button><svg class="i"><use href="#bendline"/></svg>Ohyb podle čáry</button><button><svg class="i"><use href="#zbend"/></svg>Z ohyb</button></div>
  </div><h2>Příruba</h2></div>
  <div class="grp g3"><div class="cols">
    <div><button><svg class="i"><use href="#extend"/></svg>Prodloužit přírubu</button><button><svg class="i"><use href="#taper"/></svg>Zkosení ohybu</button><button><svg class="i"><use href="#ncut"/></svg>Normálový řez</button></div>
  </div><h2>Úprava</h2></div>
  <div class="grp g4"><div class="cols">
    <div><button><svg class="i"><use href="#corner"/></svg>Uzavřít roh</button></div>
  </div><h2>Roh</h2></div>
  <div class="grp g5"><div class="cols">
    <div><button><svg class="i"><use href="#dimple"/></svg>Důlek</button><button><svg class="i"><use href="#dimple"/></svg>Štěrbina</button><button><svg class="i"><use href="#punch"/></svg>Děrování</button></div>
    <div><button><svg class="i"><use href="#louver"/></svg>Odvzdušnění</button><button><svg class="i"><use href="#extrude"/></svg>Vysunout</button><button><svg class="i"><use href="#hole"/></svg>Díra</button></div>
    <div><button><svg class="i"><use href="#add"/></svg>Přidat<svg class="a"><use href="#scar"/></svg></button></div>
  </div><h2>Tvarování</h2></div>
  <div class="grp g6"><div class="cols">
    <div><button><svg class="i"><use href="#fold"/></svg>Svinout</button><button><svg class="i"><use href="#unfold"/></svg>Rozvinout</button><button><svg class="i"><use href="#flat"/></svg>Vyhlazený</button></div>
    <div><button><svg class="i"><use href="#linear"/></svg>Lineární rozvinutí</button><button><svg class="i"><use href="#chbend"/></svg>Změnit ohyb</button><button><svg class="i"><use href="#info"/></svg>Zobrazit Info ohybu<svg class="a"><use href="#scar"/></svg></button></div>
    <div><button><svg class="i"><use href="#station"/></svg>Nastavit stacionární povrch.</button></div>
  </div><h2>Ohyb</h2></div>
  <div class="grp g7"><div class="cols">
    <div><button><svg class="i"><use href="#rip"/></svg>Načrtnutý útržek</button><button><svg class="i"><use href="#shear"/></svg>Nastřižení</button><button><svg class="i"><use href="#conv"/></svg>Konvertovat na plechový díl</button></div>
  </div><h2>Konvertovat</h2></div>
  <div class="grp g8"><div class="cols">
    <div><button aria-label="Pole"><svg class="i"><use href="#pattern"/></svg><svg class="a"><use href="#scar"/></svg></button><button aria-label="Zrcadlit"><svg class="i"><use href="#mirror"/></svg><svg class="a"><use href="#scar"/></svg></button><button aria-label="Zaoblit"><svg class="i"><use href="#fillet"/></svg><svg class="a"><use href="#scar"/></svg></button></div>
    <div><button aria-label="Zkosit"><svg class="i"><use href="#chamf"/></svg></button></div>
  </div><h2>Základní ú...</h2></div>
</section>

<div class="tools" role="toolbar" aria-label="Výběr">
  <span class="grip"></span>
  <button class="on" aria-label="Výběr"><svg class="i"><use href="#pick"/></svg></button>
  <button aria-label="Přidat"><svg class="i"><use href="#plus"/></svg></button>
  <button aria-label="Odebrat"><svg class="i"><use href="#minus"/></svg></button>
  <button aria-label="Oknem"><svg class="i"><use href="#marq"/></svg></button>
  <button class="narrow" aria-label="Typ okna"><svg class="a"><use href="#car"/></svg></button>
  <button aria-label="Mnohoúhelník"><svg class="i"><use href="#hex"/></svg></button>
  <span class="vs"></span>
  <button aria-label="Filtr barev"><svg class="i"><use href="#rgb"/></svg></button>
  <div class="combo"><select aria-label="Filtr"><option>Vše</option></select></div>
  <button class="on" aria-label="Filtr dílu"><svg class="i"><use href="#cubef"/></svg></button>
  <div class="combo off"><select aria-label="Rozsah" disabled><option>Pouze díl</option></select></div>
  <button aria-label="Reference"><svg class="i"><use href="#ref1"/></svg></button>
  <button aria-label="Časová reference"><svg class="i"><use href="#ref2"/></svg></button>
  <span class="vs"></span>
  <button aria-label="Seznam 1"><svg class="i"><use href="#l1"/></svg></button>
  <button aria-label="Seznam 2"><svg class="i"><use href="#l2"/></svg></button>
  <button aria-label="Seznam 3"><svg class="i"><use href="#l3"/></svg></button>
  <button aria-label="Seznam 4"><svg class="i"><use href="#l4"/></svg></button>
  <button aria-label="Poslední výběr"><svg class="i"><use href="#arr2"/></svg></button>
  <button aria-label="Pořadí"><svg class="i"><use href="#rows"/></svg></button>
  <button aria-label="Vybrat v oblasti"><svg class="i"><use href="#boxsel"/></svg></button>
  <button aria-label="Vybrat v objemu"><svg class="i"><use href="#ballsel"/></svg></button>
  <button aria-label="Nastavení výběru"><svg class="i"><use href="#gearsel"/></svg></button>
  <span class="vs"></span>
  <button aria-label="Kruhový výběr"><svg class="i"><use href="#g1"/></svg></button>
  <button aria-label="Řetězec"><svg class="i"><use href="#g2"/></svg></button>
  <button aria-label="Překryv"><svg class="i"><use href="#g3"/></svg></button>
  <div class="combo"><select aria-label="Režim výběru"><option>Jeden výběr</option></select></div>
  <button aria-label="Uchopit"><svg class="i"><use href="#g4"/></svg></button>
  <button aria-label="Nastavení uchopení"><svg class="i"><use href="#g5"/></svg></button>
  <button aria-label="Spustit"><svg class="i"><use href="#g6"/></svg></button>
  <button aria-label="Body"><svg class="i"><use href="#g7"/></svg></button>
  <button aria-label="Konec"><svg class="i"><use href="#g8"/></svg></button>
  <button aria-label="Střed"><svg class="i"><use href="#g9"/></svg></button>
  <button aria-label="Střed kružnice"><svg class="i"><use href="#g10"/></svg></button>
  <button aria-label="Kvadrant"><svg class="i"><use href="#g11"/></svg></button>
  <button aria-label="Řídicí bod"><svg class="i"><use href="#g12"/></svg></button>
  <button aria-label="Bod křivky"><svg class="i"><use href="#g13"/></svg></button>
  <button aria-label="Tečna"><svg class="i"><use href="#g14"/></svg></button>
  <button aria-label="Na úsečce"><svg class="i"><use href="#g15"/></svg></button>
  <button aria-label="Plocha"><svg class="i"><use href="#g16"/></svg></button>
  <button aria-label="Síť"><svg class="i"><use href="#g16"/></svg></button>
</div>

<main class="work">
  <aside class="manager">
    <div class="m-head"><span>Správce</span>
      <button aria-label="Ukotvit"><svg viewBox="0 0 16 16"><path d="M2 4h12v9H2zM5 7h6v3H5z" fill="none" stroke="#a3a7ab" stroke-width="1.500"/></svg></button>
      <button aria-label="Zavřít správce"><svg viewBox="0 0 16 16"><path d="M3 3l10 10M13 3L3 13" stroke="#a3a6a9" stroke-width="5"/><path d="M3 3l10 10M13 3L3 13" stroke="#f4f4f4" stroke-width="2"/></svg></button>
    </div>
    <div class="m-body">
      <nav class="side">
        <button class="on" aria-label="Historie"><svg><use href="#s1"/></svg></button>
        <button aria-label="Sestava"><svg><use href="#s2"/></svg></button>
        <button aria-label="Vizualizace"><svg><use href="#s3"/></svg></button>
        <button aria-label="Role"><svg><use href="#s4"/></svg></button>
      </nav>
      <div class="panel">
        <div class="filter">
          <div class="combo"><select aria-label="Zobrazení"><option>Show Most</option></select></div>
          <input type="text" placeholder="Zadejte pro hledání" aria-label="Zadejte pro hledání">
          <button aria-label="Filtrovat"><svg class="i"><use href="#funnel"/></svg></button>
        </div>
        <div class="th"><span>Záznam vlastnosti</span></div>
        <div class="tree">
          <ul>
            <li class="l0"><i class="chev"></i><svg class="i"><use href="#tree"/></svg><b>test_3d_to_2d</b></li>
            <li class="l1"><i class="chev"></i><svg class="i"><use href="#fcube"/></svg>Těleso(1)</li>
            <li class="l2"><i class="sp"></i><label><input class="red" type="checkbox" checked><svg class="i"><use href="#cube"/></svg>S1(Vysunout1_Základna)</label></li>
            <li class="l1"><i class="chev shut"></i><svg class="i"><use href="#fwire"/></svg>Drátový model(22)</li>
            <li class="l1"><i class="chev"></i><svg class="i"><use href="#fcube"/></svg>Plechový díl</li>
            <li class="l2"><i class="sp"></i><svg class="i"><use href="#smc"/></svg>Plechový díl</li>
            <li class="l2"><i class="chev"></i><svg class="i"><use href="#flat"/></svg>Ploché1</li>
            <li class="l3 dim"><i class="sp"></i><label><input type="checkbox"><svg class="i"><use href="#gsheet"/></svg>Ploché těleso1</label></li>
            <li class="l3 dim"><i class="sp"></i><label><input type="checkbox"><svg class="i"><use href="#gbox"/></svg>Ploché pole1</label></li>
            <li class="l1"><i class="chev"></i><svg class="i"><use href="#folder"/></svg>Historie</li>
            <li class="l2"><i class="sp"></i><label><input type="checkbox" checked><svg class="i"><use href="#csys"/></svg>Výchozí CSYS</label></li>
            <li class="l2 sel"><i class="sp"></i><label><input type="checkbox" checked><svg class="i"><use href="#wires"/></svg>Dráty1</label></li>
            <li class="l2 sel"><i class="sp"></i><label><input type="checkbox" checked><svg class="i"><use href="#sketchb"/></svg>Ski</label></li>
            <li class="l2"><i class="sp"></i><label><input type="checkbox" checked><svg class="i"><use href="#extrude"/></svg>Vys</label></li>
            <li class="l2"><i class="sp"></i><label><input type="checkbox" checked><svg class="i"><use href="#bendline"/></svg>Oh</label></li>
            <li class="l2"><i class="sp"></i><label><input type="checkbox" checked><svg class="i"><use href="#eraser"/></svg>Vyr</label></li>
            <li class="l2 end"><i class="sp"></i><svg class="i"><use href="#stop"/></svg>----- M</li>
          </ul>
          <div class="ctx" role="menu">
            <button class="hot" role="menuitem"><svg class="i"><use href="#mon"/></svg>Zamaskovat</button>
            <button role="menuitem"><svg class="i"><use href="#supp"/></svg>potlačit</button>
            <button role="menuitem"><svg class="i"><use href="#conf"/></svg>Konfigurovat vlastnost</button>
            <button role="menuitem"><svg class="i"><use href="#hfold"/></svg>Složka Historie</button>
            <hr>
            <button role="menuitem"><svg class="i"><use href="#cut"/></svg>Řezat</button>
            <button role="menuitem"><svg class="i"><use href="#copy"/></svg>Kopírovat</button>
            <button role="menuitem"><svg class="i"><use href="#del"/></svg>Odstranit</button>
            <hr>
            <button class="low" role="menuitem"><i class="blank"></i>Hladina<svg class="sub" viewBox="0 0 6 10"><path d="M1 1v8l5-4z" fill="#111"/></svg></button>
            <button class="low" role="menuitem"><svg class="i"><use href="#expand"/></svg>Otevřít / Zavřít</button>
            <button class="low" role="menuitem"><i class="blank"></i>Přizpůsobit menu</button>
          </div>
        </div>
        <button class="replay"><svg viewBox="0 0 10 12"><path d="M1 0v12l9-6z" fill="#5b6067"/></svg>Přehrát</button>
      </div>
    </div>
  </aside>

  <section class="doc">
    <div class="doc-tabs">
      <div class="dtab"><span>* test_3d_to_2d.Z3PRT</span><button aria-label="Zavřít kartu"><svg viewBox="0 0 12 12"><path d="M1 1l10 10M11 1L1 11" stroke="#86693a" stroke-width="2.500"/></svg></button></div>
      <button class="add" aria-label="Nová karta"><svg viewBox="0 0 14 14"><path d="M7 1v12M1 7h12" stroke="#a8a0a0" stroke-width="2.500"/></svg></button>
      <button class="more" aria-label="Seznam karet"><svg viewBox="0 0 12 12"><path d="M1 3h10M2 6h8l-4 4z" stroke="#85888c" fill="none" stroke-width="1.500"/></svg></button>
    </div>
    <div class="view">
      <svg class="scene" viewBox="450 240 1465 745" preserveAspectRatio="xMinYMin meet" role="img" aria-label="Plechový díl">
        <defs>
          <linearGradient id="bend" gradientUnits="userSpaceOnUse" x1="1096" y1="604" x2="1087" y2="622"><stop offset="0" stop-color="#86a0ab"/><stop offset=".45" stop-color="#6b838e"/><stop offset="1" stop-color="#95b4c0"/></linearGradient>
          <linearGradient id="slot" x1="0" y1="0" x2="1" y2="1"><stop offset="0" stop-color="#7c949e"/><stop offset=".6" stop-color="#b3d3df"/><stop offset="1" stop-color="#8fb0bd"/></linearGradient>
        </defs>
        <g stroke="#111c20" stroke-width="1" stroke-linejoin="round">
          <path d="M803 649l7 12 282 134q8 2 15-4l-5-9-14 4z" fill="#7c98a3"/>
          <path d="M1088 785l4 10q8 2 15-4L1244 701q12-8 12-22 0-9-3-12l-9 6-6 16z" fill="#8dabb8"/>
          <path d="M949 551L803 645v4l286 136 150-96z" fill="#95b4c0" stroke="none"/>
          <path d="M953 535l291 138q1 10-6 16L949 551q5-7 4-16z" fill="url(#bend)"/>
          <path d="M862 368l3-1 282 135q6 3 8 11l89 160-291-138L862 371z" fill="#7a939d"/>
          <path d="M863 366l9-7 284 135-9 8-282-135z" fill="#95b4c0"/>
          <path d="M1147 502l9-8q7 4 10 13l88 160-10 6-89-160q-2-8-8-11z" fill="#8dabb8"/>
          <path d="M1155 513l10-7M1238 689l6 12M1102 782l5 9" fill="none"/>
          <path d="M1150 500q5 3 8 10l5-4q-3-8-7-11z" fill="#b5d3df" stroke="none"/>
          <g fill="url(#slot)">
            <ellipse cx="939" cy="462" rx="20" ry="4" transform="rotate(57 939 462)"/>
            <ellipse cx="1012" cy="497" rx="20" ry="4" transform="rotate(57 1012 497)"/>
            <ellipse cx="1084" cy="531" rx="20" ry="4" transform="rotate(57 1084 531)"/>
            <ellipse cx="1157" cy="566" rx="20" ry="4" transform="rotate(57 1157 566)"/>
          </g>
          <path d="M967 706q-14-12 10-27 24-17 48-16 8 1 6 9-34 2-64 34z" fill="#7b97a3" stroke="none"/>
          <path d="M967 706q28-34 63-35-1 10-18 22-25 16-45 13z" fill="#c8c8c8" stroke="none"/>
          <path d="M967 706q28-34 63-35" fill="none"/>
        </g>
        <g fill="none" stroke="#b5741a" opacity=".4">
          <path d="M1090 595l57-37 26 10 32 60-58 38-25-12zM1114 607l65 117"/>
          <path d="M1114 607l59-38" stroke-width="1.500"/>
        </g>
        <g fill="none" stroke="#c88f3a" stroke-width="4" opacity=".75">
          <path d="M949 551l136-90"/>
          <ellipse cx="1095" cy="497" rx="20" ry="8" transform="rotate(-30 1095 497)"/>
          <path d="M967 536l278 133" stroke-width="3" stroke-dasharray="28 8" opacity=".6"/>
          <path d="M960 547l284 135" stroke-width="2" stroke-dasharray="12 6 3 6" opacity=".4"/>
        </g>
        <g fill="none" stroke="#ff9b00" stroke-width="4" stroke-linejoin="round">
          <path d="M1085 461l46-29q7-5 13-2l280 134q4 3 0 7L1094 784q-4 3-8 1L804 651q-3-3 0-6l145-94"/>
          <path d="M949 550l289 138" stroke-width="2" stroke-dasharray="60 3"/>
          <ellipse cx="1168" cy="531" rx="20" ry="8" transform="rotate(-30 1168 531)"/>
          <ellipse cx="1240" cy="566" rx="20" ry="8" transform="rotate(-30 1240 566)"/>
          <ellipse cx="1313" cy="601" rx="20" ry="8" transform="rotate(-30 1313 601)"/>
          <ellipse cx="995" cy="684" rx="41" ry="14" transform="rotate(-29 995 684)"/>
        </g>
        <path d="M1148 505l7 8 17 30-24 4-4-16z" fill="#7a939d" opacity=".4"/>
        <g stroke="#a86508" fill="#a86508"><path d="M1193 556l38-25" stroke-width="1.500"/><path d="M1231 531l-14 4 5 7z"/><path d="M1181 744h11" stroke-width="2"/></g>
        <path d="M1179 724l-9-9 6-4z" fill="#8b9894"/>
        <text x="1243" y="530" class="ax" fill="#a86508">Y</text>
        <g stroke-width="2">
          <path d="M537 882l45-30" stroke="#2ecc1d"/><path d="M592 846l-9 9-4-6z" fill="#157d12" stroke="#157d12" stroke-width="1"/>
          <path d="M537 882l-20-9" stroke="#f00"/><circle cx="517" cy="873" r="3" fill="#f22" stroke="#f00"/>
          <path d="M537 882l25 46" stroke="#00f"/><path d="M567 937l-9-9 6-4z" fill="#00a" stroke="#00a" stroke-width="1"/>
        </g>
        <text x="600" y="848" class="ax" fill="#2ecc1d">Y</text>
        <text x="511" y="876" class="ax" fill="#f00">X</text>
        <text x="572" y="951" class="ax" fill="#00f">Z</text>
      </svg>
      <p class="hint">&lt;pravý-klik&gt; pro kontextově-citlivé volby.<br>&lt;Shift-pravý-klik&gt; pro zobrazení filtru výběru.</p>
      <div class="vtools" role="toolbar" aria-label="Zobrazení">
        <button aria-label="Konec"><svg class="i"><use href="#exit"/></svg></button>
        <button class="dd" aria-label="Pohledy"><svg class="i"><use href="#film"/></svg><svg class="a"><use href="#car"/></svg></button>
        <button aria-label="Skrýt"><svg class="i"><use href="#eraser"/></svg></button>
        <button aria-label="Pohled na plochu"><svg class="i"><use href="#face"/></svg></button>
        <button class="dd" aria-label="Stínování"><svg class="i"><use href="#scube"/></svg><svg class="a"><use href="#car"/></svg></button>
        <button class="dd" aria-label="Drátový model"><svg class="i"><use href="#wcube"/></svg><svg class="a"><use href="#car"/></svg></button>
        <button class="dd" aria-label="Zobrazení entit"><svg class="i"><use href="#disp"/></svg><svg class="a"><use href="#car"/></svg></button>
        <button class="dd" aria-label="Přiblížit"><svg class="i"><use href="#zoomi"/></svg><svg class="a"><use href="#car"/></svg></button>
        <button class="dd" aria-label="Otočit"><svg class="i"><use href="#target"/></svg><svg class="a"><use href="#car"/></svg></button>
        <button aria-label="Okno"><svg class="i"><use href="#win"/></svg></button>
        <button class="dd" aria-label="Kóty"><svg class="i"><use href="#dim"/></svg><svg class="a"><use href="#car"/></svg></button>
        <button class="dd" aria-label="Maskování"><svg class="i"><use href="#mon"/></svg><svg class="a"><use href="#car"/></svg></button>
        <button class="sw black" aria-label="Barva čáry"></button>
        <button class="sw sky" aria-label="Barva plochy"></button>
        <button class="dd" aria-label="Hladiny"><svg class="i"><use href="#layers"/></svg><svg class="a"><use href="#car"/></svg></button>
        <div class="combo layer"><svg class="li"><use href="#bulb"/></svg><svg class="li"><use href="#disc"/></svg><select aria-label="Hladina"><option>0</option></select></div>
      </div>
      <div class="scale">180.142mm</div>
    </div>
  </section>
</main>

<footer class="status">
  <span class="msg">Vybrat příkaz nebo entitu.</span>
  <div class="s-btns">
    <button class="on" aria-label="Správce"><svg class="i"><use href="#b1"/></svg></button>
    <button aria-label="Obrazovka"><svg class="i"><use href="#b2"/></svg></button>
    <button aria-label="Výstup"><svg class="i"><use href="#b3"/></svg></button>
  </div>
  <input type="text" aria-label="Příkazový řádek">
</footer>
</body>
</html>
```
FILE: styles.css
```css
*{box-sizing:border-box}
html,body{height:100%}
body{margin:0;display:flex;flex-direction:column;background:#e8e9eb;color:#1e1e1e;font:14px/20px "Open Sans","Noto Sans",sans-serif;overflow:hidden}
button,input,select{font:inherit;color:inherit;margin:0}
button{border:0;background:none;padding:0;display:flex;align-items:center;justify-content:center;white-space:nowrap}
a{color:inherit;text-decoration:none}
svg{flex:none;display:block}
.sprite{position:absolute;width:0;height:0}
.i{width:20px;height:20px}
.a{width:10px;height:10px}

.title-bar{display:flex;align-items:center;height:35px;flex:none}
.quick{display:flex;align-items:center;width:297px}
.quick button{width:28px;height:24px}
.quick .logo{margin:0 13px 0 1px}
.quick .narrow{width:20px}
.tri{width:10px;height:20px}
.menu{display:flex;flex:1}
.menu a{padding:0 8px}
.menu a:nth-child(n+7){padding:0 8px 0 9px}
.app-title{width:402px}
.win-ctl{display:flex;gap:14px;padding:0 2px 6px 0;margin-left:114px}
.win-ctl svg{width:16px;height:16px}

.tab-bar{display:flex;height:27px;flex:none;border-bottom:1px solid #b7bcc4}
.tabs{display:flex;flex:1}
.tabs a{padding:5px 10px 0 11px;height:27px;white-space:nowrap}
.tabs .file{width:91px;margin-right:2px;padding:3px 0 0;text-align:center;background:#2a60b4;color:#fff;border:1px solid #3f80dc}
.tabs .on{background:#fcfcfc;border:1px solid #b7bcc4;border-bottom:0;padding:4px 11px 0}
.tab-tools{display:flex;align-items:center;padding-bottom:3px}
.col{width:12px;height:12px}
.find{position:relative;width:182px;height:24px;margin:0 12px 0 16px}
.find input{width:100%;height:24px;border:1px solid #b7bcc4;background:#fff;padding:0 3px}
.find svg{position:absolute;right:6px;top:4px;width:16px;height:16px}
::placeholder{color:#8e8e8e;opacity:1}
.gearb{margin-right:14px}
.hc{margin:0 12px 0 10px}
.m{width:14px;height:14px;margin-right:6px}
.tab-tools button:last-child .m{margin-right:0}

.ribbon{display:flex;height:116px;flex:none;background:#fcfcfc;border-bottom:1px solid #b7bcc4;padding-top:5px}
.grp{display:flex;flex-direction:column;border-right:1px solid #cdd1d6}
.cols{display:grid;height:84px;padding-left:9px}
.cols button{height:28px;gap:4px}
.cols .a{margin-left:4px}
.grp h2{margin:0;padding-top:3px;font-size:14px;line-height:20px;font-weight:400;text-align:center;color:#7c7c7c;white-space:nowrap}
.g1{width:168px}
.g1 .cols{padding-left:12px}
.g2{width:304px}
.g2 .cols{padding-left:8px;grid-template-columns:152px 1fr}
.g3{width:163px}
.g4{width:115px}
.g5{width:313px}
.g5 .cols{padding-left:8px;grid-template-columns:95px 117px 1fr}
.g6{width:508px}
.g6 .cols{padding-left:8px;grid-template-columns:100px 182px 1fr}
.g7{width:227px}
.g8{width:84px}
.g8 .cols{padding-left:8px;grid-template-columns:46px 1fr}

.tools{display:flex;align-items:center;height:35px;flex:none;padding:2px 0 0 5px}
.tools button{width:28px;height:26px;flex:none}
.tools .narrow{width:16px}
button.on{background:#ffe07a;border:1px solid #c39b3b}
.grip{width:3px;height:20px;margin-right:4px;background:repeating-linear-gradient(#8b9096 0 2px,transparent 2px 4px)}
.vs{width:1px;height:26px;margin:0 2px;background:#b7bcc4}
.combo{position:relative;width:168px;height:26px;flex:none;background:#fff;border:1px solid #b7bcc4}
.combo select{width:100%;height:100%;appearance:none;border:0;background:none;padding:0 3px;opacity:1}
.combo::after{content:"";position:absolute;right:7px;top:9px;border:3px solid transparent;border-top:5px solid #333;border-bottom:0}
.combo.off{background:#efefef;color:#8a8a8a}
.combo.off::after{border-top-color:#aaa}

.work{display:flex;flex:1;min-height:0}
.manager{width:445px;flex:none;display:flex;flex-direction:column}
.m-head{display:flex;align-items:center;gap:8px;height:26px;padding:2px 5px 0;color:#333}
.m-head span{flex:1}
.m-head svg{width:16px;height:16px}
.m-body{display:flex;flex:1;min-height:0}
.side{width:40px;display:flex;flex-direction:column}
.side button{height:60px}
.side button.on{background:#f8f8f9;border:1px solid #b7bcc4;border-right:0}
.side svg{width:30px;height:30px}
.panel{flex:1;min-width:0;display:flex;flex-direction:column;border:1px solid #b7bcc4;padding:1px}
.filter{display:flex;height:31px;border-bottom:1px solid #b7bcc4}
.filter .combo{width:186px;height:31px}
.filter input{flex:1;min-width:0;height:31px;border:1px solid #b7bcc4;padding:0 3px;background:#fff}
.filter button{width:29px;background:#fcfcfc}
.th{height:31px;background:#eff3f7;border-bottom:1px solid #b7bcc4;display:flex}
.th span{width:288px;padding:6px 5px;border-right:1px solid #b7bcc4;color:#333}
.tree{position:relative;flex:1;min-height:0;background:repeating-linear-gradient(#fff 0 23px,#f5f5f5 23px 46px)}
.tree ul{list-style:none;margin:0;padding:0;width:288px;border-right:1px solid #c9cdd6}
.tree li{display:flex;align-items:center;gap:4px;height:23px;border-bottom:1px solid #ececec;white-space:nowrap;color:#333}
.tree b{font-weight:400;color:#000}
.l1{padding-left:18px}
.l2{padding-left:36px}
.l3{padding-left:54px}
.tree li.dim{color:#939393}
.tree li.end{color:#ed1c24}
.sp,.chev{width:18px;height:12px;flex:none}
.chev::before{content:"";display:block;width:8px;height:8px;margin:-1px 0 0 4px;border:solid #222;border-width:0 3px 3px 0;transform:rotate(45deg)}
.chev.shut::before{border-color:#aaa;margin:2px 0 0 1px;transform:rotate(-45deg)}
.tree label{display:flex;align-items:center;gap:4px}
.tree input{appearance:none;width:16px;height:16px;margin-right:4px;background:#fff;border:1px solid #000;flex:none}
.tree input:checked::after{content:"";display:block;width:12px;height:12px;margin:1px;background:#0a9b1e;clip-path:polygon(0 50%,15% 42%,38% 70%,88% 0,100% 5%,42% 100%,32% 100%)}
.tree input.red:checked::after{background:#f00}
.tree .sel label{height:23px;margin-left:-4px;padding:0 13px 0 3px;background:#ffe08a;border:1px solid #c8913a}

.ctx{position:absolute;left:125px;top:268px;width:228px;padding:1px 4px 0 0;border:1px solid #b0b4ba;background:linear-gradient(90deg,#fff 30px,#d4d7db 30px 31px,#fff 31px);box-shadow:3px 3px 2px #777;color:#1e1e1e}
.ctx button{width:100%;height:26px;justify-content:flex-start;gap:10px;padding-left:6px}
.ctx .low{height:25px}
.ctx .hot{width:auto;height:22px;margin:2px 0 2px 6px;padding:0 78px 0 0;min-width:216px;background:#ffefb5;outline:5px solid #ed1c24}
.ctx .blank{width:20px}
.ctx .sub{width:6px;height:10px;margin-left:auto;margin-right:9px}
.ctx hr{height:9px;margin:0 0 0 30px;border:0;background:linear-gradient(#fff 4px,#b7bcc4 4px 5px,#fff 5px)}
.replay{height:30px;flex:none;justify-content:flex-start;gap:6px;padding-left:5px;background:#fcfcfc;border-top:2px solid #b7bcc4;font-weight:700}
.replay svg{width:10px;height:12px}

.doc{flex:1;min-width:0;display:flex;flex-direction:column;margin-left:4px}
.doc-tabs{display:flex;height:27px;flex:none;border-bottom:1px solid #b7bcc4}
.dtab{display:flex;width:222px;height:27px;padding-left:39px;gap:7px;align-items:center;background:#fcfcfc;border:1px solid #b7bcc4;border-bottom:0}
.dtab svg{width:12px;height:12px}
.add svg{width:14px;height:14px;margin-left:8px}
.more{margin-left:auto;padding-right:2px}
.more svg{width:12px;height:12px}
.view{position:relative;flex:1;min-height:0;background:linear-gradient(#fff,#9f9f9f);border-left:1px solid #b7bcc4}
.scene{position:absolute;inset:0;width:100%;height:100%}
.ax{font-size:19px;text-anchor:middle}
.hint{position:absolute;left:21px;top:28px;margin:0;color:#000}
.vtools{position:absolute;left:369px;top:2px;display:flex;align-items:center;gap:8px;height:26px}
.dd{gap:5px;padding-right:4px}
.dd + button:not(.dd){margin-left:1px}
.sw{width:20px;height:16px;border:1px solid #000}
.black{height:13px;background:#000}
.sky{height:20px;background:#bde4f5}
.combo.layer{width:144px;display:flex;align-items:center;padding-left:6px}
.li{width:18px;height:18px}
.scale{position:absolute;left:4px;bottom:0;font-size:19px;line-height:24px;color:#111}

.status{display:flex;align-items:center;height:32px;flex:none;border-top:1px solid #b7bcc4;padding-left:6px}
.msg{flex:1;color:#333}
.s-btns{display:flex;gap:10px;height:30px;align-items:center;padding:0 11px 0 10px;border-left:1px solid #8d9196}
.s-btns button{width:27px;height:27px}
.status input{width:434px;height:28px;border:1px solid #b7bcc4;border-right:0;background:#fff}
```
